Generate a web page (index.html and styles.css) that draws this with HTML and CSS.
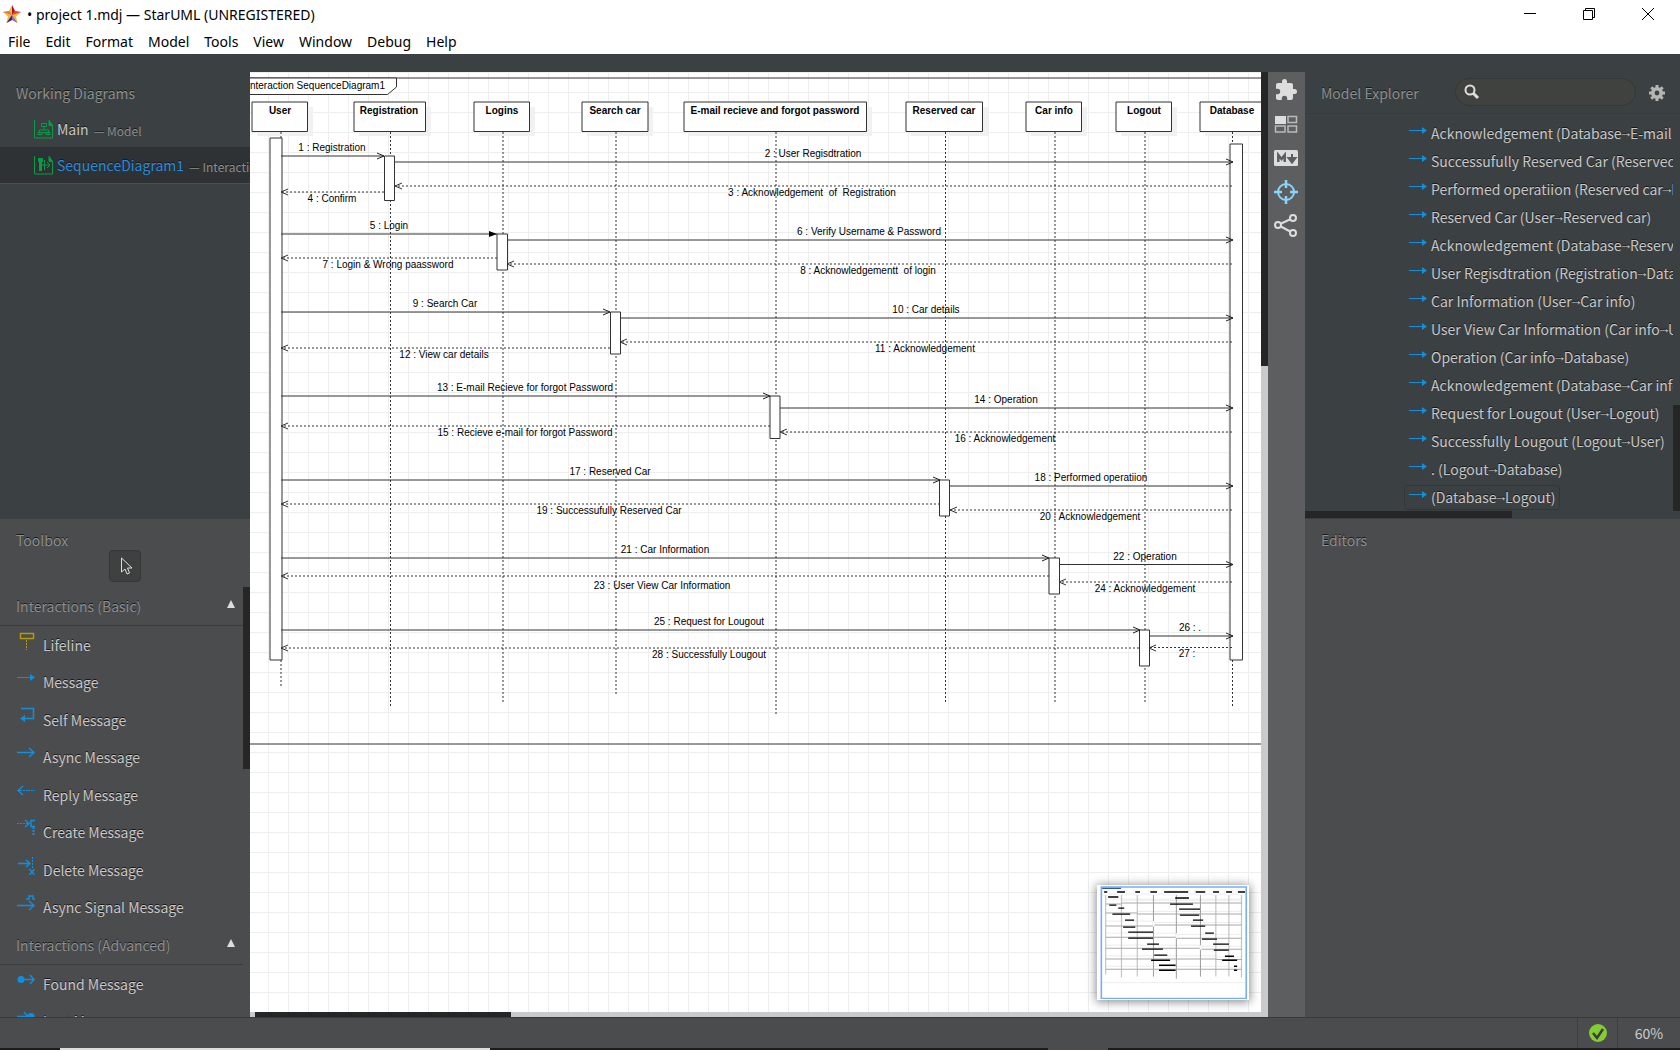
FILE: index.html
```html
<!DOCTYPE html>
<html lang="en">
<head>
<meta charset="utf-8">
<title>project 1.mdj — StarUML (UNREGISTERED)</title>
<link rel="stylesheet" href="styles.css">
</head>
<body>
<svg width="0" height="0" class="defs" aria-hidden="true">
  <defs>
    <symbol id="i-msg" viewBox="0 0 18 18"><path d="M0 8.500h13" stroke="#118fdd"/><path d="M13 5v7l5-3.500z" fill="#118fdd"/></symbol>
    <marker id="open" markerWidth="10" markerHeight="8" refX="8" refY="4" orient="auto" markerUnits="userSpaceOnUse"><path d="M1 1l7 3-7 3" fill="none" stroke="#222"/></marker>
    <marker id="solid" markerWidth="10" markerHeight="8" refX="8" refY="4" orient="auto" markerUnits="userSpaceOnUse"><path d="M0 1l8 3-8 3z" fill="#000"/></marker>
    <pattern id="grid" x="18" y="0" width="20" height="20" patternUnits="userSpaceOnUse"><path d="M.5 0v20M0 .5h20" stroke="#eee"/></pattern>
  </defs>
</svg>
<header class="titlebar">
  <svg class="logo" viewBox="0 0 20 20"><path d="M10 1l3 6 6 1-5 4.500 1.500 6.500L10 16l-5.500 3L6 12.500 1 8l6-1z" fill="#f5b92e"/><path d="M10 1l3 6-3 4z" fill="#b3122e"/><path d="M13 7l6 1-9 3z" fill="#e8403a"/><path d="M10 11v5l-5.500 3z" fill="#35209c"/><path d="M10 11l5.500 8-5.500-3z" fill="#8d6bd8"/><path d="M1 8l6-1 3 4z" fill="#d9707a"/></svg>
  <h1>• project 1.mdj — StarUML (UNREGISTERED)</h1>
  <div class="winbtns">
    <button aria-label="Minimize"><svg viewBox="0 0 12 12"><path d="M0 5.500h12" stroke="#000"/></svg></button>
    <button aria-label="Restore"><svg viewBox="0 0 12 12"><path d="M.5 2.500h9v9h-9zM2.500 2.500v-2h9v9h-2" fill="none" stroke="#000"/></svg></button>
    <button aria-label="Close"><svg viewBox="0 0 12 12"><path d="M0 0l12 12M12 0L0 12" stroke="#000"/></svg></button>
  </div>
</header>
<nav class="menubar">
  <button>File</button><button>Edit</button><button>Format</button><button>Model</button><button>Tools</button><button>View</button><button>Window</button><button>Debug</button><button>Help</button>
</nav>
<main class="workspace">
  <aside class="side left">
    <section class="upper">
      <h2 class="wd-title">Working Diagrams</h2>
      <ul class="diagrams">
        <li><a href="#main"><svg viewBox="0 0 20 20"><path d="M.5 1v18h18V6M19 6.500h-4V1" fill="none" stroke="#0a9a48"/><path d="M15 1l4 5h-4z" fill="#0a9a48"/><path d="M7.500 4.500h5v3h-5zM10 8v3M5.500 13v-2h9v2M4 13.500h4v2H4zM12 13.500h4v2h-4zM8 13.500h4" fill="none" stroke="#0a9a48"/></svg><b>Main</b><span>— Model</span></a></li>
        <li class="active"><a href="#sequence"><svg viewBox="0 0 20 20"><path d="M.5 1v18h18V6M19 6.500h-4V1" fill="none" stroke="#0a9a48"/><path d="M15 1l4 5h-4z" fill="#0a9a48"/><path d="M4 3h5v4H4zM5 7h3v9H5z" fill="#0a9a48"/><path d="M8 10h8M13 7l3 3-3 3M10.500 5v10" fill="none" stroke="#0a9a48"/></svg><b>SequenceDiagram1</b><span>— Interaction</span></a></li>
      </ul>
    </section>
    <section class="lower toolbox">
      <h2>Toolbox</h2>
      <button class="pointer" aria-label="Select"><svg viewBox="0 0 14 20"><path d="M1.500 2v14l3.500-3 2 5 2.500-1-2-5H12z" fill="none" stroke="#ddd"/></svg></button>
      <div class="toolscroll">
        <div class="tools">
          <h3>Interactions (Basic)<i></i></h3>
          <ul>
            <li><button><svg viewBox="0 0 18 18"><path d="M3.500 1.500h13v5h-13z" fill="none" stroke="#b39a00" stroke-width="1.500"/><path d="M9.500 8v10" stroke="#b39a00" stroke-dasharray="2 1"/></svg>Lifeline</button></li>
            <li><button><svg><use href="#i-msg"/></svg>Message</button></li>
            <li><button><svg viewBox="0 0 18 18"><path d="M4 1.500h12.500v10H7" fill="none" stroke="#118fdd" stroke-width="1.500"/><path d="M8 8v7l-5-3.500z" fill="#118fdd"/></svg>Self Message</button></li>
            <li><button><svg viewBox="0 0 18 18"><path d="M0 8.500h17M12 4l5 4.500-5 4.500" fill="none" stroke="#118fdd" stroke-width="1.500"/></svg>Async Message</button></li>
            <li><button><svg viewBox="0 0 18 18"><path d="M6 4L1 8.500 6 13" fill="none" stroke="#118fdd" stroke-width="1.500"/><path d="M1 8.500h17" stroke="#118fdd" stroke-dasharray="4 1 2 1"/></svg>Reply Message</button></li>
            <li><button><svg viewBox="0 0 18 18"><path d="M0 4.500h11" stroke="#118fdd" stroke-dasharray="2 1"/><path d="M8 1l4 3.500L8 8M18 1.500h-4v6h4" fill="none" stroke="#118fdd" stroke-width="1.500"/><path d="M16.500 8v9" stroke="#118fdd" stroke-width="2" stroke-dasharray="2 1"/></svg>Create Message</button></li>
            <li><button><svg viewBox="0 0 18 18"><path d="M1 6.500h12M9 3l4 3.500L9 10M12.500 12l5 6M17.500 12l-5 6" fill="none" stroke="#118fdd" stroke-width="1.500"/><path d="M15.500 0v11" stroke="#118fdd" stroke-dasharray="2 1"/></svg>Delete Message</button></li>
            <li><button><svg viewBox="0 0 18 18"><path d="M0 11.500h17M12 7l5 4.500-5 4.500M9 5h3V2h4v3h2" fill="none" stroke="#118fdd" stroke-width="1.500"/></svg>Async Signal Message</button></li>
          </ul>
          <h3>Interactions (Advanced)<i></i></h3>
          <ul class="short">
            <li><button><svg viewBox="0 0 18 18"><circle cx="4" cy="8.500" r="3.500" fill="#118fdd"/><path d="M4 8.500h13M13 4l4 4.500-4 4.500" fill="none" stroke="#118fdd" stroke-width="1.500"/></svg>Found Message</button></li>
            <li><button><svg viewBox="0 0 18 18"><circle cx="14" cy="8.500" r="3.500" fill="#118fdd"/><path d="M0 8.500h11M7 4l4 4.500L7 13" fill="none" stroke="#118fdd" stroke-width="1.500"/></svg>Lost Message</button></li>
          </ul>
        </div>
        <div class="vtrack"><div class="thumb"></div></div>
      </div>
    </section>
  </aside>

  <section class="editor">
    <div class="canvas">
      <svg class="diagram">
        <rect width="100%" height="100%" fill="#fff"/>
        <rect width="100%" height="100%" fill="url(#grid)"/>
        <g transform="translate(-250 -72)">
          <path class="ln" d="M250 78H1900M250 744H1900"/>
          <path class="box" d="M240 78h156.500v9l-9 7.500H240z"/>
          <text x="385" y="89" text-anchor="end">Interaction SequenceDiagram1</text>
          <path fill="#f1f1f1" d="M257 107h56v29h-56zM359 107h72v29h-72zM479 107h56v29h-56zM587 107h66v29h-66zM689 107h183v29H689zM911 107h77v29h-77zM1031 107h56v29h-56zM1121 107h56v29h-56zM1205 107h66v29h-66z"/>
          <path class="box" d="M252 102h55.500v29.500H252zM354 102h71.500v29.500H354zM474 102h55.500v29.500H474zM582 102h66v29.500h-66zM684 102h182.500v29.500H684zM906 102h76.500v29.500H906zM1026 102h55.500v29.500H1026zM1116 102h55.500v29.500H1116zM1200 102h66v29.500h-66z"/>
          <g class="hd" text-anchor="middle">
            <text x="280" y="114">User</text><text x="389" y="114">Registration</text><text x="502" y="114">Logins</text><text x="615" y="114">Search car</text><text x="775" y="114">E-mail recieve and forgot password</text><text x="944" y="114">Reserved car</text><text x="1054" y="114">Car info</text><text x="1144" y="114">Logout</text><text x="1232" y="114">Database</text>
          </g>
          <path class="life" d="M281 132v556M390.500 132v574M503 132v570M616 132v564M776 132v582M945.500 132v570M1055 132v570M1145 132v570M1232.500 132v574"/>
          <path class="box" d="M270 138h12v522h-12zM384.500 156h10v44.500h-10zM497 234h10.500v36H497zM610.500 312h10v42h-10zM770 396h10v42.500h-10zM939.500 480h10v36h-10zM1049 558h10.500v36H1049zM1139.500 630h10v36h-10zM1230 144h12.500v516H1230z"/>
          <g class="ln" marker-end="url(#open)">
            <path d="M281 156h103"/><path d="M395 162h838"/>
            <path d="M508 240h725"/><path d="M281 312h329"/><path d="M620 318h613"/>
            <path d="M281 396h489"/><path d="M780 408h453"/><path d="M281 480h659"/><path d="M950 486h283"/>
            <path d="M281 558h768"/><path d="M1059 564.500h174"/><path d="M281 630h859"/><path d="M1150 636h83"/>
          </g>
          <path class="ln" marker-end="url(#solid)" d="M281 234h216"/>
          <g class="dash">
            <path d="M1232 186H395"/><path d="M384 192H281"/><path d="M497 258H281"/><path d="M1232 264H507"/>
            <path d="M1232 342H620"/><path d="M610 348H281"/><path d="M770 426H281"/><path d="M1232 432H780"/>
            <path d="M940 504H281"/><path d="M1232 510H950"/><path d="M1049 576H281"/><path d="M1232 582H1059"/>
            <path d="M1232 647.500H1149"/><path d="M1139 648H281"/>
          </g>
          <g class="heads">
            <path d="M402 183l-7 3 7 3M288 189l-7 3 7 3M288 255l-7 3 7 3M514 261l-7 3 7 3M627 339l-7 3 7 3M288 345l-7 3 7 3M288 423l-7 3 7 3M787 429l-7 3 7 3M288 501l-7 3 7 3M957 507l-7 3 7 3M288 573l-7 3 7 3M1066 579l-7 3 7 3M1156 645l-7 3 7 3M288 645l-7 3 7 3"/>
          </g>
          <g class="msg" text-anchor="middle">
            <text x="332" y="151">1 : Registration</text>
            <text x="813" y="157">2 : User Regisdtration</text>
            <text x="812" y="196">3 : Acknowledgement&#160; of&#160; Registration</text>
            <text x="332" y="202">4 : Confirm</text>
            <text x="389" y="229">5 : Login</text>
            <text x="869" y="235">6 : Verify Username &amp; Password</text>
            <text x="388" y="268">7 : Login &amp; Wrong paassword</text>
            <text x="868" y="274">8 : Acknowledgementt&#160; of login</text>
            <text x="445" y="307">9 : Search Car</text>
            <text x="926" y="313">10 : Car details</text>
            <text x="925" y="352">11 : Acknowledgement</text>
            <text x="444" y="358">12 : View car details</text>
            <text x="525" y="391">13 : E-mail Recieve for forgot Password</text>
            <text x="1006" y="403">14 : Operation</text>
            <text x="525" y="436">15 : Recieve e-mail for forgot Password</text>
            <text x="1005" y="442">16 : Acknowledgement</text>
            <text x="610" y="475">17 : Reserved Car</text>
            <text x="1091" y="481">18 : Performed operatiion</text>
            <text x="609" y="514">19 : Successufully Reserved Car</text>
            <text x="1090" y="520">20 : Acknowledgement</text>
            <text x="665" y="553">21 : Car Information</text>
            <text x="1145" y="560">22 : Operation</text>
            <text x="662" y="589">23 : User View Car Information</text>
            <text x="1145" y="592">24 : Acknowledgement</text>
            <text x="709" y="625">25 : Request for Lougout</text>
            <text x="1190" y="631">26 : .</text>
            <text x="1187" y="657">27 :</text>
            <text x="709" y="658">28 : Successfully Lougout</text>
          </g>
        </g>
      </svg>
      <div class="minimap">
        <svg viewBox="93 76 385 344" preserveAspectRatio="none">
          <path d="M104 103h364M115 118h345M115 184h122M115 220h180M115 256h240M115 288h280M115 319h313M155 122h305M195 155h265M237 188h223M294 224h166M355 259h105M395 292h65M428 322h32M104 368h364" stroke="#e6e6e6" stroke-width="2" fill="none"/>
          <path d="M115 106v238M155 106v247M195 106v244M394 106v244M427 106v244M459 106v247" stroke="#c4c4c4" stroke-width="3"/>
          <path d="M236 106v244M294 106v250M355 106v244" stroke="#777" stroke-width="2"/>
          <path d="M115 133h40M155 130h305M115 160h80M195 163h265M115 199h120M237 196h223M115 232h180M294 235h166M115 265h240M355 268h105M115 297h280M395 299h65M115 328h345" stroke="#a8a8a8" stroke-width="3"/>
          <path d="M106 93h19v13h-19zM142 93h26v13h-26zM186 93h20v13h-20zM223 93h25v13h-25zM260 93h68v13h-68zM340 93h28v13h-28zM384 93h21v13h-21zM416 93h22v13h-22zM447 93h22v13h-22zM234 184h5v16h-5zM353 256h5v14h-5zM292 220h4v15h-4z" fill="#fff" stroke="#ddd"/>
          <path d="M111 97h8M144 97h20M190 97h12M228 97h17M263 97h61M343 97h24M387 97h15M420 97h15M450 97h18M121 112h26M291 115h35M278 133h58M124 136h18M147 145h15M301 148h53M132 163h45M303 166h49M164 181h23M336 181h26M159 202h31M331 199h36M172 217h63M367 220h22M172 235h63M359 238h38M220 253h30M387 253h40M207 268h53M389 271h38M238 286h33M417 289h23M230 301h48M410 301h38M250 316h42M440 319h8M250 331h42M440 331h8" stroke="#000" stroke-width="4"/>
          <path d="M102 82h369v333H104V82" fill="none" stroke="#77acf8" stroke-width="4"/>
          <path d="M106 86h48" stroke="#123a80" stroke-width="3"/>
        </svg>
      </div>
    </div>
    <div class="vscroll"><div class="thumb"></div></div>
    <div class="hscroll"><div class="thumb"></div></div>
  </section>

  <nav class="rail">
    <button aria-label="Extensions"><svg viewBox="0 0 24 24"><path d="M20.500 11H19V7c0-1.100-.9-2-2-2h-4V3.500a2.500 2.500 0 0 0-5 0V5H4c-1.100 0-2 .9-2 2v3.800h1.500a2.700 2.700 0 0 1 0 5.400H2V20c0 1.100.9 2 2 2h3.800v-1.500a2.700 2.700 0 0 1 5.400 0V22H17c1.100 0 2-.9 2-2v-4h1.500a2.500 2.500 0 0 0 0-5z" fill="#ddd"/></svg></button>
    <button aria-label="Thumbnails"><svg viewBox="0 0 24 24"><path d="M1 4h11v8H1z" fill="#ddd"/><path d="M14 4.500h8.500v6H14zM1.500 14H11v6H1.500zM14 14h8.500v6H14z" fill="none" stroke="#bbb" stroke-width="1.500"/></svg></button>
    <button aria-label="Markdown"><svg viewBox="0 0 24 24"><rect y="4" width="24" height="16" rx="1.500" fill="#ddd"/><path d="M4.300 16V9l3.200 4 3.200-4v7" fill="none" stroke="#5d5e60" stroke-width="2.500"/><path d="M18 8v6M14.500 12h7L18 16.500z" fill="#5d5e60" stroke="#5d5e60" stroke-width="2"/></svg></button>
    <button aria-label="Target"><svg viewBox="0 0 24 24"><circle cx="12" cy="12" r="8" fill="none" stroke="#8ad4f5" stroke-width="2"/><path d="M12 0v8M12 16v8M0 12h8M16 12h8" stroke="#8ad4f5" stroke-width="2.500"/></svg></button>
    <button aria-label="Share"><svg viewBox="0 0 24 24"><path d="M4 11l15-7M4 11l15 8" stroke="#ddd" stroke-width="2"/><g fill="#5d5e60" stroke="#ddd" stroke-width="2"><circle cx="4" cy="11" r="3"/><circle cx="19" cy="4" r="3"/><circle cx="19" cy="19" r="3"/></g></svg></button>
  </nav>

  <aside class="side right">
    <section class="upper explorer">
      <div class="exhead">
        <h2>Model Explorer</h2>
        <label class="search"><svg viewBox="0 0 16 16"><circle cx="6" cy="6" r="4.500" fill="none" stroke="#ddd" stroke-width="2"/><path d="M9 9l5 5" stroke="#ddd" stroke-width="3"/></svg><input type="text" aria-label="Search"></label>
        <button aria-label="Settings"><svg viewBox="0 0 16 16"><circle cx="8" cy="8" r="4.200" fill="none" stroke="#b4b5b5" stroke-width="3.600"/><path d="M8 0v3M8 13v3M0 8h3M13 8h3M2.300 2.300l2.200 2.200M11.500 11.500l2.200 2.200M13.700 2.300l-2.200 2.200M4.500 11.500l-2.200 2.200" stroke="#b4b5b5" stroke-width="3"/></svg></button>
      </div>
      <div class="treewrap">
        <ul class="tree">
          <li><a href="#m1"><svg><use href="#i-msg"/></svg>Acknowledgement (Database<i>→</i>E-mail recieve)</a></li>
          <li><a href="#m2"><svg><use href="#i-msg"/></svg>Successufully Reserved Car (Reserved car<i>→</i>User)</a></li>
          <li><a href="#m3"><svg><use href="#i-msg"/></svg>Performed operatiion (Reserved car<i>→</i>Database)</a></li>
          <li><a href="#m4"><svg><use href="#i-msg"/></svg>Reserved Car (User<i>→</i>Reserved car)</a></li>
          <li><a href="#m5"><svg><use href="#i-msg"/></svg>Acknowledgement (Database<i>→</i>Reserved car)</a></li>
          <li><a href="#m6"><svg><use href="#i-msg"/></svg>User Regisdtration (Registration<i>→</i>Database)</a></li>
          <li><a href="#m7"><svg><use href="#i-msg"/></svg>Car Information (User<i>→</i>Car info)</a></li>
          <li><a href="#m8"><svg><use href="#i-msg"/></svg>User View Car Information (Car info<i>→</i>User)</a></li>
          <li><a href="#m9"><svg><use href="#i-msg"/></svg>Operation (Car info<i>→</i>Database)</a></li>
          <li><a href="#m10"><svg><use href="#i-msg"/></svg>Acknowledgement (Database<i>→</i>Car info)</a></li>
          <li><a href="#m11"><svg><use href="#i-msg"/></svg>Request for Lougout (User<i>→</i>Logout)</a></li>
          <li><a href="#m12"><svg><use href="#i-msg"/></svg>Successfully Lougout (Logout<i>→</i>User)</a></li>
          <li><a href="#m13"><svg><use href="#i-msg"/></svg>. (Logout<i>→</i>Database)</a></li>
          <li><a href="#m14" class="sel"><svg><use href="#i-msg"/></svg>(Database<i>→</i>Logout)</a></li>
        </ul>
        <div class="vtrack"><div class="thumb"></div></div>
      </div>
      <div class="htrack"><div class="thumb"></div></div>
    </section>
    <section class="lower">
      <h2>Editors</h2>
    </section>
  </aside>
</main>
<footer class="statusbar">
  <button aria-label="Validation"><svg viewBox="0 0 18 18"><circle cx="9" cy="9" r="9" fill="#84cc33"/><path d="M4 9l4 5 6-9" fill="none" stroke="#3a3d3a" stroke-width="2.500"/></svg></button>
  <button class="zoom">60%</button>
</footer>
<div class="taskedge"><i></i><b></b></div>
</body>
</html>
```
FILE: styles.css
```css
* { box-sizing: border-box; }
body {
  margin: 0;
  height: 100vh;
  display: flex;
  flex-direction: column;
  overflow: hidden;
  background: #3b4042;
  font-family: "Noto Sans CJK SC", "Noto Sans", sans-serif;
  font-size: 14px;
  color: #c8c8c8;
}
h1, h2, h3, ul { margin: 0; padding: 0; font-weight: 400; font-size: 14px; list-style: none; }
button, input { border: 0; background: none; padding: 0; font: inherit; color: inherit; }
a { color: inherit; text-decoration: none; }
svg { display: block; flex: none; }
.defs { position: absolute; }

.titlebar, .menubar { background: #fff; color: #000; display: flex; align-items: center; flex: none; font-family: "Noto Sans", "Open Sans", sans-serif; }
.titlebar { height: 28px; padding-left: 2px; gap: 5px; }
.titlebar h1 { line-height: 28px; flex: 1; padding-top: 1px; }
.logo { width: 20px; height: 20px; }
.winbtns { display: flex; padding-right: 3px; }
.winbtns button { width: 59px; height: 28px; display: grid; place-items: center; }
.winbtns svg { width: 12px; height: 12px; }
.menubar { height: 26px; padding: 0 8px; gap: 15px; }

.workspace { flex: 1; min-height: 0; display: flex; }
.side { display: grid; grid-template-rows: 465fr 498fr; min-height: 0; text-shadow: 0 -1px 0 #1a1a1a; }
.side > section { min-height: 0; min-width: 0; overflow: hidden; display: flex; flex-direction: column; }
.side h2, .side h3 { color: #8d8f8f; line-height: 24px; }
.left { width: 250px; flex: none; }
.right { width: 375px; flex: none; }
.lower { background: #4b4c4e; }
.side .wd-title { padding: 27px 16px 6px; }
.diagrams a { display: flex; align-items: center; height: 36px; padding-left: 34px; white-space: nowrap; overflow: hidden; }
.diagrams svg { width: 20px; height: 20px; margin-right: 3px; }
.diagrams b { font-weight: 400; }
.diagrams span { font-size: 12px; color: #8d8f8f; margin-left: 5px; padding-top: 2px; }
.diagrams .active { background: #2e3234; border-bottom: 1px solid #4a4f51; }
.active b { color: #2a8bdd; }

.toolbox h2 { padding: 9px 16px 0; height: 31px; flex: none; }
.pointer { width: 32px; height: 32px; margin-left: 109px; flex: none; background: #3f4141; border: 1px solid #353737; border-radius: 4px; display: grid; place-items: center; padding-left: 3px; }
.pointer svg { width: 14px; height: 20px; }
.toolscroll { display: flex; flex: 1; min-height: 0; margin-top: 5px; }
.tools { flex: 1; overflow: hidden; }
.tools h3 { display: flex; justify-content: space-between; align-items: center; height: 39px; padding: 0 8px 0 16px; border-bottom: 1px solid #3a3b3c; }
.tools h3 i { border: 4px solid transparent; border-bottom: 8px solid #ddd; border-top: 0; margin-bottom: 4px; }
.tools ul { display: grid; height: 300px; grid-auto-rows: 1fr; }
.tools ul.short { height: 75px; }
.tools li button { display: flex; align-items: center; width: 100%; height: 100%; padding-left: 17px; text-shadow: inherit; }
.tools svg { width: 18px; height: 18px; margin-right: 8px; margin-bottom: 8px; }
.vtrack { width: 7px; flex: none; }
.thumb { background: #262626; }
.toolbox .thumb { height: 182px; }

.editor { flex: 1; min-width: 0; margin-top: 18px; display: grid; grid-template: minmax(0, 1fr) 5px / minmax(0, 1fr) 7px; background: #cacaca; }
.canvas { position: relative; overflow: hidden; background: #fff; }
.diagram { width: 100%; height: 100%; }
.vscroll .thumb { height: 294px; }
.hscroll { grid-column: 1 / 3; padding-left: 5px; }
.hscroll .thumb { width: 256px; height: 5px; }
.diagram text { font-family: "Liberation Sans", Arial, sans-serif; font-size: 10px; fill: #000; }
.diagram .hd text { font-weight: 700; }
.ln, .life, .dash, .heads { fill: none; stroke: #333; stroke-width: 1; }
.box { fill: #fff; stroke: #333; }
.life, .dash { stroke-dasharray: 2 2; }
.minimap { position: absolute; right: 12px; bottom: 12px; width: 152px; height: 115px; background: #fff; box-shadow: 0 1px 9px 1px rgba(0, 0, 0, 0.45); }
.minimap svg { width: 152px; height: 115px; }

.rail { width: 37px; flex: none; margin-top: 18px; background: #5d5e60; display: flex; flex-direction: column; align-items: center; padding: 6px 2px 0 0; gap: 10px; }
.rail button { width: 24px; height: 24px; }
.rail svg { width: 24px; height: 24px; }

.exhead { height: 60px; flex: none; display: flex; align-items: center; padding: 18px 15px 0 16px; border-bottom: 1px solid #373b3d; }
.exhead h2 { flex: 1; }
.exhead button { margin-left: 13px; }
.exhead button svg { width: 16px; height: 16px; }
.search { display: flex; align-items: center; width: 181px; height: 28px; padding: 0 8px; gap: 6px; margin-bottom: 2px; border-radius: 14px; background: #404240; border: 1px solid #343838; }
.search svg { width: 16px; height: 16px; }
.search input { width: 100%; min-width: 0; outline: 0; }
.treewrap { flex: 1; min-height: 0; display: flex; }
.tree { flex: 1; min-width: 0; overflow: hidden; padding: 5px 0 0 99px; white-space: nowrap; }
.tree li { height: 28px; display: flex; align-items: center; }
.tree a { display: flex; align-items: center; height: 25px; padding: 0 4px; border: 1px solid transparent; border-radius: 4px; }
.tree i { font-family: "Liberation Mono", monospace; font-style: normal; }
.tree a.sel { border-color: #323637; }
.tree svg { width: 18px; height: 18px; margin: 0 4px 4px 0; }
.treewrap .vtrack { display: flex; align-items: flex-end; }
.treewrap .thumb { width: 7px; height: 106px; }
.htrack { height: 8px; flex: none; }
.htrack .thumb { width: 207px; height: 7px; }
.right .lower h2 { padding: 9px 16px; }

.statusbar { height: 31px; flex: none; display: flex; justify-content: flex-end; background: #4b4c4e; border-top: 1px solid #38393b; color: #ccc; }
.statusbar button { width: 40px; display: grid; place-items: center; border-left: 1px solid #3c3d3e; }
.statusbar .zoom { width: 63px; }
.statusbar svg { width: 18px; height: 18px; }
.taskedge { height: 2px; flex: none; display: flex; background: #1c1c1c; }
.taskedge i { width: 430px; margin-left: 60px; background: #ddd; }
.taskedge b { width: 60px; margin-left: 558px; background: #4b4c4e; }
```
